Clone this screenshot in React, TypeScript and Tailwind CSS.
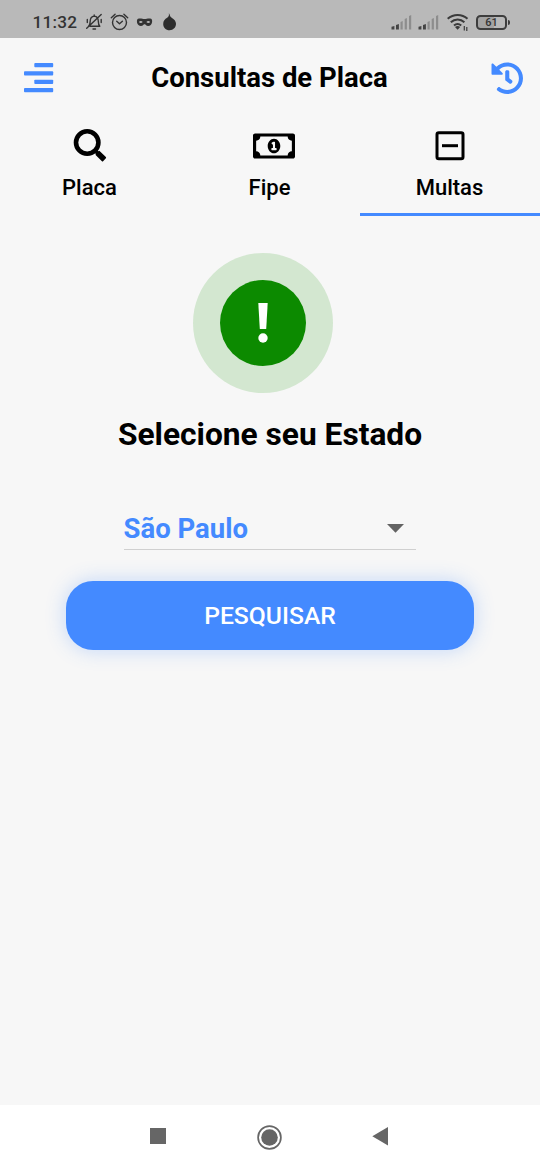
import { FaHistory, FaRegMoneyBillAlt } from "react-icons/fa";

function StatusIcons() {
  return (
    <svg width="94" height="24" viewBox="84 10 94 24" fill="none" stroke="#333" strokeWidth="1.4" strokeLinecap="round" strokeLinejoin="round">
      <path d="M90 26.300h9.800c-1-1.100-1.400-2.500-1.400-4.300 0-3.300-1.500-5.700-4.100-5.900-2.700.2-4.200 2.600-4.200 5.900 0 1.700-.5 3.200-1.500 4.300M93 29h2.500M101.200 14.500 86.700 28.300M87.300 19.500v3M101.200 19.500v3M94.200 15v1" />
      <circle cx="119.500" cy="22.500" r="7" />
      <path d="m116.700 21.300 2.800 2.500 2.900-2.500M111.300 17.800l3.800-3.600M127.700 17.800l-3.800-3.600" />
      <path fill="#333" stroke="none" fillRule="evenodd" d="M138 18.800c2.600-1 4.500.3 6.600.3s4-1.300 6.500-.3c1.600.8 1.300 4.800-.3 6.200-1.700 1.300-3.900 1.200-5.200-.3-.6-.6-1.500-.6-2.100 0-1.300 1.500-3.500 1.600-5.100.3-1.700-1.300-2-5.400-.4-6.200zm.9 3.200c1 1.300 2.800 1.300 3.800 0-.9-1.300-2.800-1.300-3.800 0zm7.500 0c1 1.300 2.800 1.300 3.800 0-1-1.300-2.900-1.300-3.800 0z" />
      <path fill="#2d2d2d" stroke="none" d="M168.800 13.300c1.400 1.100.5 3.100 3.200 4.600 2.500 1.400 4 3.500 4 5.900 0 3.700-2.700 6.400-6.400 6.400s-6.400-2.700-6.400-6.300c0-3.100 1.700-5 4-6.200 1.800-1 2-2.600 1.600-4.400z" />
    </svg>
  );
}

function Signal() {
  return (
    <svg width="21" height="16" viewBox="0 0 21 16">
      <path fill="#444" d="M.5 12.800 3.400 12v3.500H.5zM5 11l2.900-1v5.500H5z" />
      <path fill="#8d8d8d" d="m9.500 8 2.200-1v8.500H9.500zM13.700 5l2.200-1v11.500h-2.200zM18 2l2.200-1v14.500H18z" />
    </svg>
  );
}

function Wifi() {
  return (
    <svg width="23" height="18" viewBox="447 13 23 18" fill="none" stroke="#3a3a3a" strokeWidth="2">
      <path d="M447.700 18.800c5.700-5.200 14.200-5.200 19.800 0M450.800 22.300c4-3.700 9.700-3.700 13.600 0M454 25.600c2.200-2 5-2 7.200 0" />
      <path fill="#3a3a3a" stroke="none" d="M455 27c1.600-1.300 3.600-1.300 5.200 0l-2.600 2.700z" />
      <path strokeWidth="1.200" d="M464.300 26v4.500M466.800 27v4" />
    </svg>
  );
}

function StatusBar() {
  return (
    <div className="flex h-[37.500px] shrink-0 items-center bg-[#b9b9b9] pt-[7px] pl-[32.500px] pr-[30px] text-[#333]">
      <span className="w-[51.500px] text-[17.200px] leading-5 font-medium tracking-[0.2px] whitespace-nowrap">11:32</span>
      <StatusIcons />
      <div className="ml-auto flex items-center">
        <Signal />
        <div className="w-1.5" />
        <Signal />
        <div className="w-2" />
        <Wifi />
        <div className="ml-1.5 flex h-[15.500px] w-[31px] items-center justify-center rounded-[4.500px] border-2 border-[#3d3d3d] bg-[linear-gradient(90deg,#a3a3a3_58%,transparent_58%)] text-[11px] leading-none font-medium">
          61
        </div>
        <div className="ml-px h-[5px] w-[2px] rounded-r-xs bg-[#3d3d3d]" />
      </div>
    </div>
  );
}

function Header() {
  return (
    <header className="flex h-[79.500px] items-center justify-between pt-px pr-[17px] pl-6">
      <button aria-label="Menu" className="w-[29px]">
        <svg width="30" height="30" viewBox="0 0 30 30" fill="#448aff">
          <rect x="10.300" y="0" width="18.900" height="4.200" rx="0.900" />
          <rect x="0" y="8.300" width="29.200" height="4.200" rx="0.900" />
          <rect x="10.300" y="16.700" width="18.900" height="4.200" rx="0.900" />
          <rect x="0" y="25" width="29.200" height="4.200" rx="0.900" />
        </svg>
      </button>
      <h1 className="mr-[4.500px] text-[27.500px] leading-8 font-bold">Consultas de Placa</h1>
      <button aria-label="Histórico">
        <FaHistory size={32.5} color="#448aff" />
      </button>
    </header>
  );
}

function Tabs() {
  const tabs = [
    {
      label: "Placa",
      icon: (
        <svg width="36" height="36" viewBox="0 0 36 36" fill="none" stroke="#000">
          <circle cx="15.200" cy="14.500" r="11.200" strokeWidth="4.600" />
          <path d="m23 22.300 3 3" strokeWidth="3.800" />
          <path fill="#000" strokeWidth="1.600" strokeLinejoin="round" d="m27.300 23.700 6 5.900-2.800 3-6.100-6z" />
        </svg>
      ),
    },
    { label: "Fipe", icon: <div className="ml-2"><FaRegMoneyBillAlt size={42} /></div> },
    {
      label: "Multas",
      icon: (
        <svg width="30" height="30" viewBox="0 0 30 30" fill="none" stroke="#000" strokeWidth="3">
          <rect x="2" y="1.700" width="26" height="26" rx="1.800" />
          <path d="M7 14.700h16" />
        </svg>
      ),
      active: true,
    },
  ];
  return (
    <nav className="grid h-[99px] grid-cols-3">
      {tabs.map((t) => (
        <div key={t.label} className={t.active ? "flex flex-col items-center border-b-3 border-[#448aff] pt-[11px]" : "flex flex-col items-center border-b-3 border-transparent pt-[11px]"}>
          <div className="flex h-9 items-center">{t.icon}</div>
          <span className="mt-[10px] mr-px text-[22px] leading-[28px] font-medium">{t.label}</span>
        </div>
      ))}
    </nav>
  );
}

export default function App() {
  return (
    <div className="flex h-[1170px] w-[540px] flex-col overflow-hidden bg-[#f7f7f7] font-['Roboto',sans-serif] text-black">
      <StatusBar />
      <Header />
      <Tabs />
      <main className="flex flex-1 flex-col items-center pt-[36.500px]">
        <div className="mr-[15px] flex size-[140px] items-center justify-center rounded-full bg-[#d3e7d0]">
          <div className="flex size-[86px] items-center justify-center rounded-full bg-[#0c8a00]">
            <svg width="12" height="40" viewBox="0 0 12 40" fill="#fff">
              <path d="M1.300 0h9.400L9.200 26H2.800z" />
              <circle cx="6" cy="35" r="4.700" />
            </svg>
          </div>
        </div>
        <h2 className="mt-[22px] text-[31.700px] leading-10 font-bold">Selecione seu Estado</h2>
        <div className="mt-[53px] mr-px flex h-[42px] w-[292px] items-center justify-between border-b border-[#d0d0d0] pr-3">
          <span className="pt-[2px] text-[27.500px] leading-8 font-bold text-[#448aff]">São Paulo</span>
          <svg width="17" height="9" viewBox="0 0 17 9" fill="#636363">
            <path d="M0 0h17L8.500 8.700z" />
          </svg>
        </div>
        <button className="mt-[31px] h-[69px] w-[408px] rounded-[27px] bg-[#448aff] pt-[2px] text-[24.700px] font-medium text-white shadow-[0_0_20px_rgba(68,138,255,0.3)]">
          PESQUISAR
        </button>
      </main>
      <footer className="flex h-[65px] shrink-0 items-start bg-white pt-[20px] pl-[149.500px]">
        <div className="mt-[2.500px] size-4 bg-[#666]" />
        <svg className="ml-[91.500px]" width="26" height="26" viewBox="0 0 26 26">
          <circle cx="12.500" cy="12.500" r="11.400" fill="none" stroke="#666" strokeWidth="1.700" />
          <circle cx="12.500" cy="12.500" r="8.300" fill="#666" />
        </svg>
        <svg className="mt-[1.500px] ml-[89px]" width="17" height="19" viewBox="0 0 17 19" fill="#666">
          <path d="M16 0v18.500L.3 9.300z" />
        </svg>
      </footer>
    </div>
  );
}
